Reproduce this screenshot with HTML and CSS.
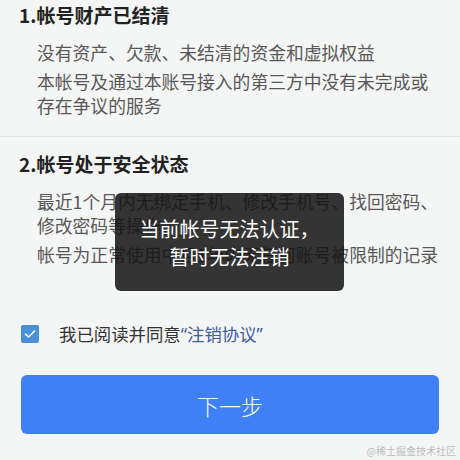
FILE: index.html
```html
<!DOCTYPE html>
<html lang="zh-CN">
<head>
<meta charset="utf-8">
<link rel="stylesheet" href="styles.css">
</head>
<body>
<div class="page">
  <section class="sec sec-first">
    <h2 class="sec-title">1.帐号财产已结清</h2>
    <div class="sec-body">
      <p class="item">没有资产、欠款、未结清的资金和虚拟权益</p>
      <p class="item">本帐号及通过本账号接入的第三方中没有未完成或<br>存在争议的服务</p>
    </div>
  </section>
  <section class="sec sec-second">
    <h2 class="sec-title">2.帐号处于安全状态</h2>
    <div class="sec-body">
      <p class="item">最近1个月内无绑定手机、修改手机号、找回密码、<br>修改密码等操作</p>
      <p class="item">帐号为正常使用中且1年内无任何账号被限制的记录</p>
    </div>
  </section>
  <label class="agree">
    <span class="check">
      <svg width="12" height="10" viewBox="0 0 12 10"><path d="M1.5 5.2 L4.6 8 L10.5 2" fill="none" stroke="#fff" stroke-width="1.6" stroke-linecap="round" stroke-linejoin="round"/></svg>
    </span>
    <span class="agree-text">我已阅读并同意<span class="link">“注销协议”</span></span>
  </label>
  <button class="next">下一步</button>
</div>
<div class="toast">当前帐号无法认证，<br>暂时无法注销</div>
<div class="watermark">@稀土掘金技术社区</div>
</body>
</html>
```
FILE: styles.css
```css
* { box-sizing: border-box; }
html, body { margin: 0; padding: 0; }
body {
  width: 460px;
  height: 460px;
  background: #f4f5f5;
  font-family: "Noto Sans CJK SC", "Noto Sans", sans-serif;
  position: relative;
  overflow: hidden;
}
.page { display: flex; flex-direction: column; }
.sec { padding-left: 19px; }
.sec-first { border-bottom: 1px solid #e4e6e6; padding-bottom: 18px; }
.sec-second { padding-top: 12px; }
.sec-title {
  margin: 0;
  font-size: 19px;
  line-height: 30px;
  font-weight: bold;
  color: #222;
}
.sec-body { padding-left: 18px; margin-top: 10px; display: flex; flex-direction: column; gap: 4px; }
.sec-second .sec-body { margin-top: 10px; }
.item {
  margin: 0;
  font-size: 17.8px;
  line-height: 24.5px;
  color: #585858;
  white-space: nowrap;
}
.agree {
  display: flex;
  align-items: center;
  gap: 20px;
  margin: 56px 0 0 21px;
}
.check {
  width: 18px; height: 18px;
  border-radius: 2px;
  background: #4a90d9;
  display: flex; align-items: center; justify-content: center;
}
.agree-text {
  font-family: "Noto Sans", "Noto Sans CJK SC", sans-serif;
  font-size: 17.4px;
  line-height: 24px;
  color: #333;
}
.link { color: #3e5d9c; }
.next {
  margin: 29px 21px 0;
  height: 59px;
  border: 0;
  border-radius: 6px;
  background: #3f80f6;
  color: #fff;
  font-family: inherit;
  font-size: 22px;
  font-weight: 300;
  padding: 0;
}
.toast {
  position: absolute;
  left: 115px; top: 193px;
  width: 229px; height: 98px;
  border-radius: 6px;
  background: rgba(20, 20, 20, 0.86);
  color: #fff;
  font-size: 20px;
  line-height: 28px;
  text-align: center;
  display: flex; align-items: center; justify-content: center;
  padding-top: 2px;
}
.watermark {
  position: absolute;
  right: 4px; bottom: 2px;
  font-size: 10px;
  line-height: 14px;
  color: #bdbdbd;
}
```
